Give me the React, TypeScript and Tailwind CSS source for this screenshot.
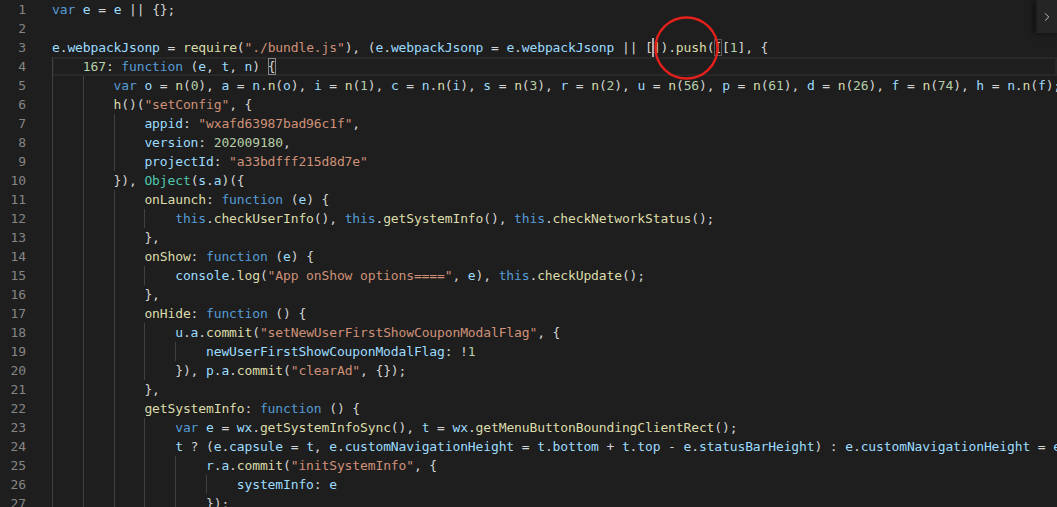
import React from "react";
import { ChevronRight } from "lucide-react";

type Tok = { t: string; c: string };

const CW = 7.7;

const LINES: string[] = [
  "var e = e || {};",
  "",
  'e.webpackJsonp = require("./bundle.js"), (e.webpackJsonp = e.webpackJsonp || []).push([[1], {',
  "    167: function (e, t, n) {",
  "        var o = n(0), a = n.n(o), i = n(1), c = n.n(i), s = n(3), r = n(2), u = n(56), p = n(61), d = n(26), f = n(74), h = n.n(f);",
  '        h()("setConfig", {',
  '            appid: "wxafd63987bad96c1f",',
  "            version: 202009180,",
  '            projectId: "a33bdfff215d8d7e"',
  "        }), Object(s.a)({",
  "            onLaunch: function (e) {",
  "                this.checkUserInfo(), this.getSystemInfo(), this.checkNetworkStatus();",
  "            },",
  "            onShow: function (e) {",
  '                console.log("App onShow options====", e), this.checkUpdate();',
  "            },",
  "            onHide: function () {",
  '                u.a.commit("setNewUserFirstShowCouponModalFlag", {',
  "                    newUserFirstShowCouponModalFlag: !1",
  '                }), p.a.commit("clearAd", {});',
  "            },",
  "            getSystemInfo: function () {",
  "                var e = wx.getSystemInfoSync(), t = wx.getMenuButtonBoundingClientRect();",
  "                t ? (e.capsule = t, e.customNavigationHeight = t.bottom + t.top - e.statusBarHeight) : e.customNavigationHeight = e.statusBarHeight + 44;",
  '                    r.a.commit("initSystemInfo", {',
  "                        systemInfo: e",
  "                    });",
];

const KW = new Set(["var", "function", "this"]);

const CLS: Record<string, string> = {
  str: "text-[#ce9178]",
  num: "text-[#b5cea8]",
  kw: "text-[#569cd6]",
  type: "text-[#4ec9b0]",
  fn: "text-[#dcdcaa]",
  var: "text-[#9cdcfe]",
  p: "text-[#d4d4d4]",
};

function tokenize(s: string): Tok[] {
  const out: Tok[] = [];
  let i = 0;
  while (i < s.length) {
    const ch = s[i];
    if (ch === '"') {
      const j = s.indexOf('"', i + 1);
      out.push({ t: s.slice(i, j + 1), c: "str" });
      i = j + 1;
      continue;
    }
    if (/[0-9]/.test(ch)) {
      let j = i;
      while (j < s.length && /[0-9]/.test(s[j])) j++;
      out.push({ t: s.slice(i, j), c: "num" });
      i = j;
      continue;
    }
    if (/[A-Za-z_$]/.test(ch)) {
      let j = i;
      while (j < s.length && /[\w$]/.test(s[j])) j++;
      const w = s.slice(i, j);
      const rest = s.slice(j);
      let c = "var";
      if (KW.has(w)) c = "kw";
      else if (w === "Object") c = "type";
      else if (rest.startsWith("(")) c = "fn";
      else if (/^:\s*function/.test(rest)) c = "fn";
      out.push({ t: w, c });
      i = j;
      continue;
    }
    let j = i;
    while (j < s.length && !/[A-Za-z_$0-9"]/.test(s[j])) j++;
    out.push({ t: s.slice(i, j), c: "p" });
    i = j;
  }
  return out;
}

function Line({ text, idx }: { text: string; idx: number }) {
  const m = text.match(/^ */);
  const indent = m ? m[0].length : 0;
  const levels = Math.floor(indent / 4);
  const body = text.slice(levels * 4);
  const toks = tokenize(body);
  const active = idx === 3;
  return (
    <div
      className={
        "relative h-[19px] leading-[19px] whitespace-pre flex " +
        (active ? "shadow-[inset_0_0_0_2px_#282828]" : "")
      }
    >
      {Array.from({ length: levels }).map((_, k) => (
        <span key={k} className="inline-block w-[30.8px] h-[19px] border-l border-[#404040] shrink-0" />
      ))}
      <span>
        {toks.map((tk, k) => (
          <span key={k} className={CLS[tk.c]}>
            {tk.t}
          </span>
        ))}
      </span>
      {idx === 2 && (
        <>
          <span
            className="absolute top-0 w-[2px] h-[19px] bg-[#aeafad]"
            style={{ left: 78 * CW - 1 }}
          />
          <span
            className="absolute top-[1px] h-[17px] border border-[#5a5a5a]"
            style={{ left: 86 * CW, width: CW }}
          />
        </>
      )}
      {idx === 3 && (
        <span
          className="absolute top-[1px] h-[17px] border border-[#888888]"
          style={{ left: 28 * CW, width: CW + 1 }}
        />
      )}
    </div>
  );
}

export default function App() {
  return (
    <div
      className="relative w-[1057px] h-[507px] overflow-hidden bg-[#1e1e1e] text-[13px] tracking-[-0.126px]"
      style={{ fontFamily: '"DejaVu Sans Mono", "Liberation Mono", monospace' }}
    >
      <div className="flex">
        <div className="w-[52px] shrink-0 flex flex-col">
          {LINES.map((_, i) => (
            <div key={i} className="h-[19px] leading-[19px] w-[26px] text-right text-[#858585]">
              {i + 1}
            </div>
          ))}
        </div>
        <div className="flex-1 flex flex-col min-w-0">
          {LINES.map((l, i) => (
            <Line key={i} text={l} idx={i} />
          ))}
        </div>
      </div>

      <div className="absolute top-0 right-0 w-[22px] h-[33px] bg-[#252526] border-l-2 border-[#1a1a1a] shadow-[-2px_0_6px_rgba(0,0,0,0.5)] flex items-center justify-center">
        <ChevronRight size={14} strokeWidth={1.6} className="text-[#c5c5c5]" />
      </div>

      <svg
        className="absolute left-0 top-0 pointer-events-none"
        width={1057}
        height={507}
      >
        <ellipse cx={686.5} cy={48} rx={31} ry={30.5} fill="none" stroke="#e3201b" strokeWidth={2.4} />
      </svg>
    </div>
  );
}
